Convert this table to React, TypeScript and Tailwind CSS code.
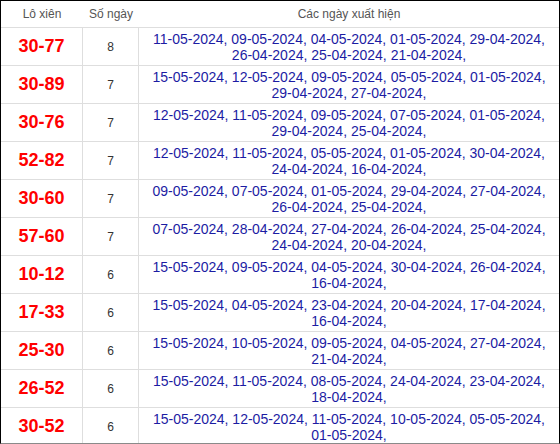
import React from "react";

interface Row {
  pair: string;
  count: number;
  dates: string[];
}

const rows: Row[] = [
  { pair: "30-77", count: 8, dates: ["11-05-2024", "09-05-2024", "04-05-2024", "01-05-2024", "29-04-2024", "26-04-2024", "25-04-2024", "21-04-2024"] },
  { pair: "30-89", count: 7, dates: ["15-05-2024", "12-05-2024", "09-05-2024", "05-05-2024", "01-05-2024", "29-04-2024", "27-04-2024"] },
  { pair: "30-76", count: 7, dates: ["12-05-2024", "11-05-2024", "09-05-2024", "07-05-2024", "01-05-2024", "29-04-2024", "25-04-2024"] },
  { pair: "52-82", count: 7, dates: ["12-05-2024", "11-05-2024", "05-05-2024", "01-05-2024", "30-04-2024", "24-04-2024", "16-04-2024"] },
  { pair: "30-60", count: 7, dates: ["09-05-2024", "07-05-2024", "01-05-2024", "29-04-2024", "27-04-2024", "26-04-2024", "25-04-2024"] },
  { pair: "57-60", count: 7, dates: ["07-05-2024", "28-04-2024", "27-04-2024", "26-04-2024", "25-04-2024", "24-04-2024", "20-04-2024"] },
  { pair: "10-12", count: 6, dates: ["15-05-2024", "09-05-2024", "04-05-2024", "30-04-2024", "26-04-2024", "16-04-2024"] },
  { pair: "17-33", count: 6, dates: ["15-05-2024", "04-05-2024", "23-04-2024", "20-04-2024", "17-04-2024", "16-04-2024"] },
  { pair: "25-30", count: 6, dates: ["15-05-2024", "10-05-2024", "09-05-2024", "04-05-2024", "27-04-2024", "21-04-2024"] },
  { pair: "26-52", count: 6, dates: ["15-05-2024", "11-05-2024", "08-05-2024", "24-04-2024", "23-04-2024", "18-04-2024"] },
  { pair: "30-52", count: 6, dates: ["15-05-2024", "12-05-2024", "11-05-2024", "10-05-2024", "05-05-2024", "01-05-2024"] },
];

export default function App() {
  return (
    <div className="h-[444px] w-[560px] overflow-hidden bg-white font-['Liberation_Sans',Arial,sans-serif]">
      <div className="h-[444px] overflow-hidden border-x border-t border-black border-b border-b-[#8a8a8a]">
        {/* Header */}
        <div className="flex h-[27px] items-center border-b border-[#dedede] text-[12px] text-[#555]">
          <div className="w-[82px] text-center">Lô xiên</div>
          <div className="w-[56px] text-center">Số ngày</div>
          <div className="w-[420px] text-center">Các ngày xuất hiện</div>
        </div>

        {/* Rows */}
        {rows.map((row) => (
          <div key={row.pair} className="flex h-[38px] border-b border-[#dedede]">
            <div className="flex w-[82px] items-center justify-center border-r border-[#dedede] text-[18px] font-bold text-[#ff0000]">
              {row.pair}
            </div>
            <div className="flex w-[56px] items-center justify-center border-r border-[#dedede] text-[12px] text-[#333]">
              {row.count}
            </div>
            <div className="w-[420px] px-1 pt-[3px] text-center text-[14px] leading-[16px] text-[#1c1ca3]">
              {row.dates.map((d) => d + ", ").join("")}
            </div>
          </div>
        ))}
      </div>
    </div>
  );
}
